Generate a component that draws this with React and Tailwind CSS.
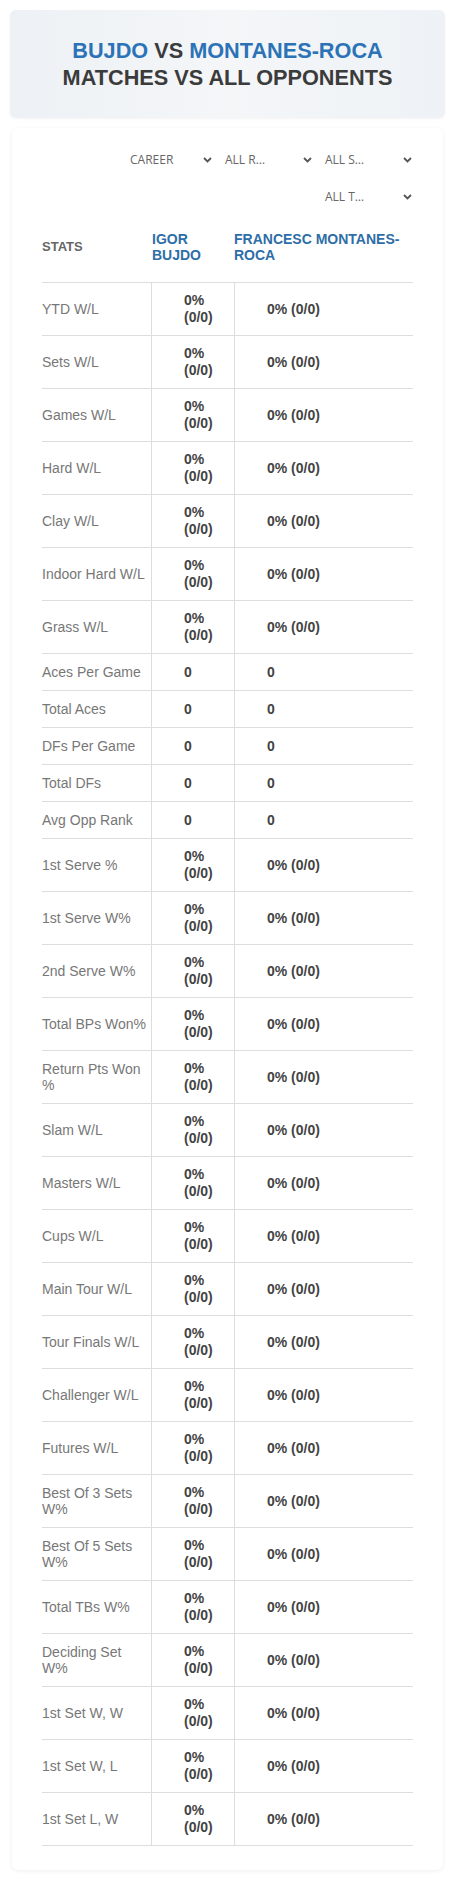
const rows = [
  ["YTD W/L", "pct"],
  ["Sets W/L", "pct"],
  ["Games W/L", "pct"],
  ["Hard W/L", "pct"],
  ["Clay W/L", "pct"],
  ["Indoor Hard W/L", "pct"],
  ["Grass W/L", "pct"],
  ["Aces Per Game", "num"],
  ["Total Aces", "num"],
  ["DFs Per Game", "num"],
  ["Total DFs", "num"],
  ["Avg Opp Rank", "num"],
  ["1st Serve %", "pct"],
  ["1st Serve W%", "pct"],
  ["2nd Serve W%", "pct"],
  ["Total BPs Won%", "pct"],
  ["Return Pts Won %", "pct"],
  ["Slam W/L", "pct"],
  ["Masters W/L", "pct"],
  ["Cups W/L", "pct"],
  ["Main Tour W/L", "pct"],
  ["Tour Finals W/L", "pct"],
  ["Challenger W/L", "pct"],
  ["Futures W/L", "pct"],
  ["Best Of 3 Sets W%", "pct"],
  ["Best Of 5 Sets W%", "pct"],
  ["Total TBs W%", "pct"],
  ["Deciding Set W%", "pct"],
  ["1st Set W, W", "pct"],
  ["1st Set W, L", "pct"],
  ["1st Set L, W", "pct"],
]

const filters = [
  { label: "CAREER", w: "w-[95px]" },
  { label: "ALL R…", w: "w-[100px]" },
  { label: "ALL S…", w: "w-[100px]" },
  { label: "ALL T…", w: "w-[100px]" },
]

function Chevron() {
  return (
    <svg width="9" height="6" viewBox="0 0 9 6" fill="none">
      <path d="M1 1l3.5 3.5L8 1" stroke="#555" strokeWidth="1.8" />
    </svg>
  )
}

function FilterSelect({ label, w }) {
  return (
    <div className={`${w} h-[37px] flex items-center justify-between pl-[12px] pr-[1px]`}>
      <span className="text-[12px] text-[#666] font-['Open_Sans',sans-serif]">{label}</span>
      <Chevron />
    </div>
  )
}

export default function App() {
  return (
    <div className="w-[455px] bg-white font-['Liberation_Sans',Arial,sans-serif] pb-[10px]">
      {/* Title card */}
      <div className="mx-[10px] mt-[10px] h-[108px] rounded-md bg-linear-to-r from-[#edf1f5] via-[#f4f6f8] to-[#eef2f6] shadow-[0_1px_3px_rgba(0,0,0,0.05)] flex flex-col items-center justify-center font-bold text-[21.7px] leading-[27px] uppercase">
        <div>
          <span className="text-[#2b73b6]">Bujdo</span>
          <span className="text-[#3b3b3b]"> vs </span>
          <span className="text-[#2b73b6]">Montanes-Roca</span>
        </div>
        <div className="text-[#3b3b3b]">Matches vs all opponents</div>
      </div>

      {/* Stats box */}
      <div className="mx-[12px] mt-[10px] pt-[13px] pb-[24px] px-[30px] rounded-md bg-white shadow-[0_1px_4px_rgba(0,0,0,0.07)]">
        <div className="flex flex-wrap justify-end">
          {filters.map((f) => (
            <FilterSelect key={f.label} {...f} />
          ))}
        </div>

        {/* Header */}
        <div className="grid grid-cols-[109px_83px_1fr] h-[67px] items-center pb-[4px] font-bold">
          <div className="text-[13px] text-[#666] uppercase">Stats</div>
          <div className="pl-[1px] pr-1 text-[14px] leading-4 text-[#2e6ea8] uppercase">Igor Bujdo</div>
          <div className="text-[14px] leading-4 text-[#2e6ea8] uppercase">Francesc Montanes-Roca</div>
        </div>

        {/* Rows */}
        <div className="border-b border-[#dddddd]">
          {rows.map(([label, type]) => (
            <div key={label} className="grid grid-cols-[109px_83px_1fr] min-h-[37px] border-t border-[#dddddd]">
              <div className="flex items-center py-[9px] pr-[2px] text-[14px] leading-[16px] text-[#777]">
                {label}
              </div>
              <div className="flex items-center border-l border-[#dddddd] pl-[32px] py-[9px] text-[14px] leading-[17px] font-bold text-[#444]">
                {type === "pct" ? "0% (0/0)" : "0"}
              </div>
              <div className="flex items-center border-l border-[#dddddd] pl-[32px] py-[9px] text-[14px] leading-[17px] font-bold text-[#444]">
                {type === "pct" ? "0% (0/0)" : "0"}
              </div>
            </div>
          ))}
        </div>
      </div>
    </div>
  )
}
